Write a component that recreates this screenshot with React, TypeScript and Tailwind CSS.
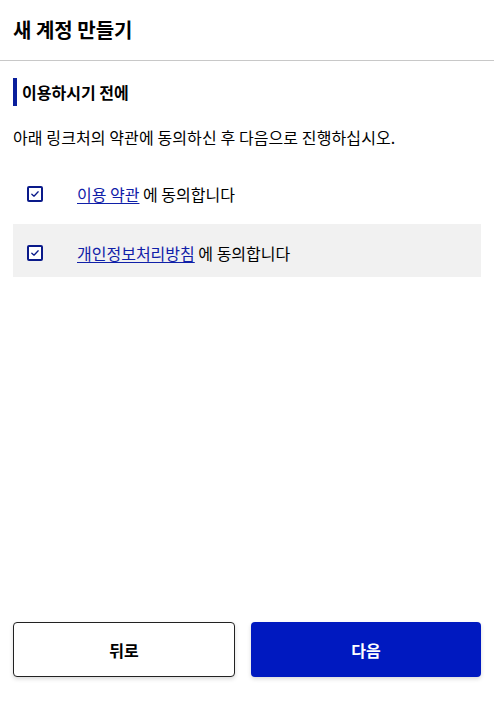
import React from "react";

function Check() {
  return (
    <span className="flex h-4 w-4 shrink-0 items-center justify-center rounded-[2px] border-2 border-[#0a1a8a] bg-white">
      <svg viewBox="0 0 12 12" className="h-[10px] w-[10px]" fill="none">
        <path d="M2.2 6.2 L4.8 8.6 L9.8 3.4" stroke="#0a1a8a" strokeWidth="1.6" strokeLinecap="round" strokeLinejoin="round" />
      </svg>
    </span>
  );
}

export default function App() {
  const font = { fontFamily: '"Noto Sans CJK KR", "Noto Sans", sans-serif' };
  return (
    <div className="flex h-[704px] w-[494px] flex-col bg-white text-black" style={font}>
      <div className="flex h-[61px] items-center border-b border-[#c8c8c8] px-[13px]">
        <h1 className="text-[20px] font-bold leading-none">새 계정 만들기</h1>
      </div>
      <div className="flex flex-1 flex-col px-[13px] pt-[17px]">
        <div className="flex h-[28px] items-center border-l-4 border-[#0a1f9c] pl-[5px]">
          <h2 className="text-[16px] font-bold leading-none">이용하시기 전에</h2>
        </div>
        <p className="mt-[20px] text-[16px] leading-[22px] tracking-[0.1px]">아래 링크처의 약관에 동의하신 후 다음으로 진행하십시오.</p>
        <div className="mt-[20px] flex flex-col gap-[4px]">
          <div className="flex h-[52px] items-center pl-[14px]">
            <Check />
            <span className="ml-[34px] text-[16px]">
              <a href="#" className="text-[#1020a8] underline underline-offset-2">이용 약관</a> 에 동의합니다
            </span>
          </div>
          <div className="flex h-[53px] items-center bg-[#f1f1f1] pl-[14px] pt-[5px]">
            <Check />
            <span className="ml-[34px] text-[16px]">
              <a href="#" className="text-[#1020a8] underline underline-offset-2">개인정보처리방침</a> 에 동의합니다
            </span>
          </div>
        </div>
        <div className="mt-auto mb-[27px] flex gap-[16px]">
          <button className="h-[55px] w-[222px] rounded-[4px] border border-[#222] bg-white text-[16px] font-bold shadow-[0_2px_4px_rgba(0,0,0,0.15)]">뒤로</button>
          <button className="h-[55px] flex-1 rounded-[4px] bg-[#0019c0] text-[16px] font-bold text-white shadow-[0_2px_4px_rgba(0,0,0,0.15)]">다음</button>
        </div>
      </div>
    </div>
  );
}
